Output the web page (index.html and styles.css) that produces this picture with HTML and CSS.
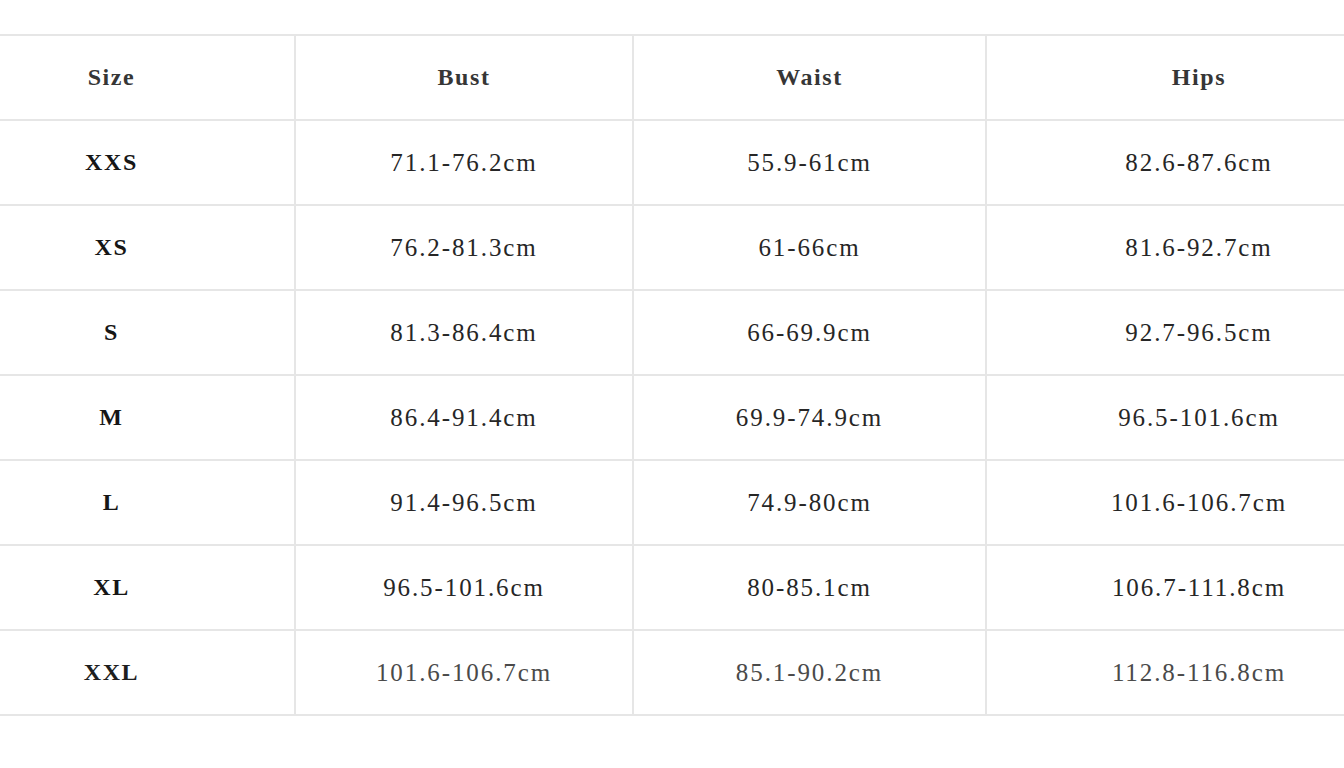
FILE: index.html
```html
<!DOCTYPE html>
<html>
<head>
<meta charset="utf-8">
<link rel="stylesheet" href="styles.css">
</head>
<body>
<div class="wrap">
<table class="chart">
  <colgroup>
    <col class="c1"><col class="c2"><col class="c3"><col class="c4">
  </colgroup>
  <thead>
    <tr><th>Size</th><th>Bust</th><th>Waist</th><th>Hips</th></tr>
  </thead>
  <tbody>
    <tr><td class="sz">XXS</td><td>71.1-76.2cm</td><td>55.9-61cm</td><td>82.6-87.6cm</td></tr>
    <tr><td class="sz">XS</td><td>76.2-81.3cm</td><td>61-66cm</td><td>81.6-92.7cm</td></tr>
    <tr><td class="sz">S</td><td>81.3-86.4cm</td><td>66-69.9cm</td><td>92.7-96.5cm</td></tr>
    <tr><td class="sz">M</td><td>86.4-91.4cm</td><td>69.9-74.9cm</td><td>96.5-101.6cm</td></tr>
    <tr><td class="sz">L</td><td>91.4-96.5cm</td><td>74.9-80cm</td><td>101.6-106.7cm</td></tr>
    <tr><td class="sz">XL</td><td>96.5-101.6cm</td><td>80-85.1cm</td><td>106.7-111.8cm</td></tr>
    <tr class="last"><td class="sz">XXL</td><td>101.6-106.7cm</td><td>85.1-90.2cm</td><td>112.8-116.8cm</td></tr>
  </tbody>
</table>
</div>
</body>
</html>
```

FILE: styles.css
```css
html, body {
  margin: 0;
  padding: 0;
  background: #ffffff;
  overflow: hidden;
}
.wrap {
  width: 1344px;
  height: 768px;
  overflow: hidden;
  padding-top: 34px;
  box-sizing: border-box;
}
.chart {
  margin-left: -73px;
  border-collapse: collapse;
  table-layout: fixed;
  width: 1484px;
  font-family: "Liberation Serif", "Times New Roman", serif;
}
.c1 { width: 367px; }
.c2 { width: 338px; }
.c3 { width: 353px; }
.c4 { width: 426px; }
.chart th, .chart td {
  border: 2px solid #e6e6e6;
  height: 83px;
  padding: 0;
  text-align: center;
  vertical-align: middle;
}
.chart th {
  font-size: 24px;
  font-weight: bold;
  color: #363636;
  letter-spacing: 1.6px;
}
.chart td {
  font-size: 25px;
  color: #262626;
  letter-spacing: 1.9px;
}
.chart td.sz {
  font-size: 24px;
  font-weight: bold;
  color: #161616;
  letter-spacing: 1.6px;
}
.chart tr.last td {
  color: #4a4a4a;
}
.chart tr.last td.sz {
  color: #1e1e1e;
}
```
